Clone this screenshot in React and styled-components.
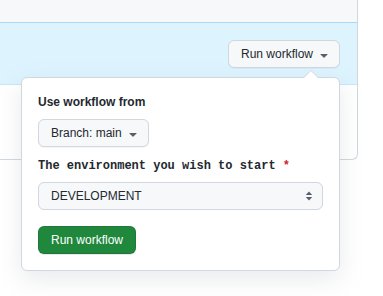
import styled, { createGlobalStyle } from "styled-components";

const GlobalStyle = createGlobalStyle`
  html, body {
    margin: 0;
    padding: 0;
    background: #ffffff;
  }
  body {
    font-family: "Liberation Sans", Arial, sans-serif;
    font-size: 12px;
    color: #1f2328;
  }
  #root {
    min-height: 100vh;
  }
`;

const Panel = styled.div`
  width: 357px;
  border-right: 1px solid #d0d7de;
  border-bottom: 1px solid #d0d7de;
  border-bottom-right-radius: 6px;
`;

const TopRow = styled.div`
  height: 22px;
  background: #f6f8fa;
`;

const RunRow = styled.div`
  display: flex;
  justify-content: flex-end;
  padding: 17px 17px 16px 0;
  background: #ddf4ff;
  border-top: 1px solid #a8d8fb;
  border-bottom: 1px solid #c5e6fc;
`;

const EmptyRow = styled.div`
  height: 74px;
`;

const Anchor = styled.div`
  position: relative;
`;

const Button = styled.button`
  display: inline-flex;
  align-items: center;
  gap: 3px;
  height: 28px;
  padding: 0 ${(p) => (p.$caret ? "7px" : "12px")} 0 12px;
  border: 1px solid ${(p) => (p.$primary ? "rgba(31,35,40,0.15)" : "#d0d7de")};
  border-radius: 6px;
  background: ${(p) => (p.$primary ? "#1f883d" : "#f6f8fa")};
  color: ${(p) => (p.$primary ? "#ffffff" : "#24292f")};
  font-family: "Liberation Sans", Arial, sans-serif;
  font-size: 12px;
  line-height: 1;
  cursor: pointer;
  box-shadow: ${(p) =>
    p.$primary ? "0 1px 0 rgba(31,35,40,0.1)" : "0 1px 0 rgba(31,35,40,0.04)"};
  svg {
    margin-top: 1px;
  }
`;

const Popover = styled.div`
  position: absolute;
  right: 0;
  top: calc(100% + 9px);
  width: 319px;
  box-sizing: border-box;
  padding: 15px 16px 16px;
  background: #ffffff;
  border: 1px solid #d0d7de;
  border-radius: 6px;
  box-shadow: 0 8px 24px rgba(140, 149, 159, 0.2);
  z-index: 10;

  &::before,
  &::after {
    content: "";
    position: absolute;
    border-style: solid;
    border-color: transparent;
  }
  &::before {
    top: -16px;
    right: 20px;
    border-width: 8px;
    border-bottom-color: #d0d7de;
  }
  &::after {
    top: -14px;
    right: 21px;
    border-width: 7px;
    border-bottom-color: #ffffff;
  }
`;

const Label = styled.div`
  font-weight: bold;
  font-size: 12px;
  line-height: 18px;
  color: #24292f;
  font-family: ${(p) =>
    p.$mono ? '"Liberation Mono", "DejaVu Sans Mono", monospace' : "inherit"};
  margin-top: ${(p) => (p.$mono ? "10px" : "0")};
  margin-bottom: ${(p) => (p.$mono ? "7px" : "8px")};
`;

const Required = styled.span`
  color: #cf222e;
`;

const SelectBox = styled.div`
  display: flex;
  align-items: center;
  justify-content: space-between;
  height: 28px;
  box-sizing: border-box;
  padding: 0 8px 0 12px;
  border: 1px solid #d0d7de;
  border-radius: 6px;
  background: #f6f8fa;
  color: #24292f;
  font-size: 12px;
`;

const Footer = styled.div`
  margin-top: 16px;
`;

const Caret = () => (
  <svg width="16" height="16" viewBox="0 0 16 16" fill="#57606a">
    <path d="m4.427 7.427 3.396 3.396a.25.25 0 0 0 .354 0l3.396-3.396A.25.25 0 0 0 11.396 7H4.604a.25.25 0 0 0-.177.427Z" />
  </svg>
);

const UpDown = () => (
  <svg width="10" height="14" viewBox="0 0 10 14" fill="#57606a">
    <path d="M5 2.5 8.2 6H1.8Z" />
    <path d="M5 11.5 8.2 8H1.8Z" />
  </svg>
);

export default function App() {
  return (
    <>
      <GlobalStyle />
      <Panel>
        <TopRow />
        <RunRow>
          <Anchor>
            <Button $caret>
              Run workflow
              <Caret />
            </Button>
            <Popover>
              <Label>Use workflow from</Label>
              <Button $caret>
                Branch: main
                <Caret />
              </Button>
              <Label $mono>
                The environment you wish to start <Required>*</Required>
              </Label>
              <SelectBox>
                DEVELOPMENT
                <UpDown />
              </SelectBox>
              <Footer>
                <Button $primary>Run workflow</Button>
              </Footer>
            </Popover>
          </Anchor>
        </RunRow>
        <EmptyRow />
      </Panel>
    </>
  );
}
